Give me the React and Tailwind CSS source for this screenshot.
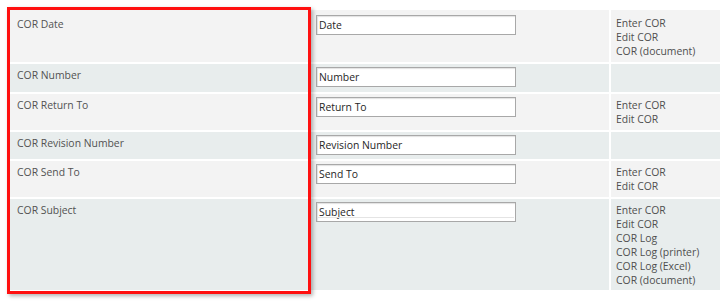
import React from "react";

const rows = [
  { label: "COR Date", input: "Date", links: ["Enter COR", "Edit COR", "COR (document)"], bg: "bg-[#f3f3f3]", first: true },
  { label: "COR Number", input: "Number", links: [], bg: "bg-[#e8eded]" },
  { label: "COR Return To", input: "Return To", links: ["Enter COR", "Edit COR"], bg: "bg-[#f3f3f3]" },
  { label: "COR Revision Number", input: "Revision Number", links: [], bg: "bg-[#e8eded]" },
  { label: "COR Send To", input: "Send To", links: ["Enter COR", "Edit COR"], bg: "bg-[#f3f3f3]" },
  { label: "COR Subject", input: "Subject", links: ["Enter COR", "Edit COR", "COR Log", "COR Log (printer)", "COR Log (Excel)", "COR (document)"], bg: "bg-[#e8eded]", subject: true },
];

export default function App() {
  return (
    <div className="relative w-[720px] h-[304px] bg-white overflow-hidden font-['Open_Sans',sans-serif] text-[10.4px] leading-[14px]">
      <div className="pt-[10px] pl-[10px]">
        <div className="grid grid-cols-[298px_299px_1fr] grid-rows-[52px_28px_36px_27px_36px_91px] gap-[2px]">
          {rows.map((r) => (
            <React.Fragment key={r.label}>
              <div className={`${r.bg} pl-[7px] ${r.first ? "pt-[7px]" : "pt-[4px]"} text-[#525252]`}>{r.label}</div>
              <div className={`${r.bg} pl-[6px] ${r.first ? "pt-[5px]" : "pt-[3px]"}`}>
                <div className="relative w-[200px] h-[20px] border border-[#a8a8a8] bg-white shadow-[inset_1px_1px_1px_rgba(0,0,0,0.12)] pl-[2px] flex items-center text-[#262626]">
                  {r.input}
                  {r.subject && <div className="absolute left-[1px] right-[1px] bottom-[3px] h-px bg-[#e4e4e4]" />}
                </div>
              </div>
              <div className={`${r.bg} pl-[5px] ${r.first ? "pt-[6px]" : "pt-[4px]"} text-[#4f4f4f]`}>
                {r.links.map((l) => (
                  <div key={l}>{l}</div>
                ))}
              </div>
            </React.Fragment>
          ))}
        </div>
      </div>
      <div className="absolute left-[7px] top-[7px] w-[304px] h-[287px] border-[3px] border-[#ff1010] shadow-[2px_2px_4px_rgba(0,0,0,0.3)]" />
    </div>
  );
}
